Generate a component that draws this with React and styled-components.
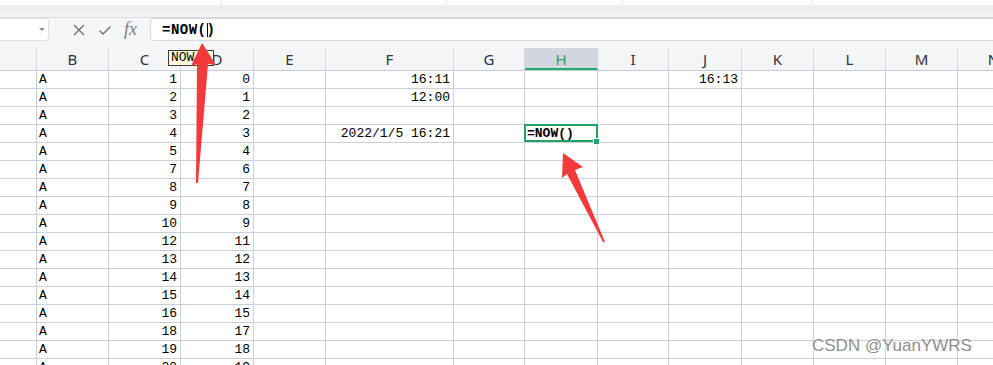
import styled, { createGlobalStyle } from "styled-components";

const GlobalStyle = createGlobalStyle`
  html, body {
    margin: 0;
    padding: 0;
    background: #ffffff;
    overflow: hidden;
  }
  body {
    font-family: "Liberation Mono", "DejaVu Sans Mono", monospace;
  }
`;

const COLS = [
  { key: "A", label: "", width: 37 },
  { key: "B", label: "B", width: 72 },
  { key: "C", label: "C", width: 72 },
  { key: "D", label: "D", width: 73 },
  { key: "E", label: "E", width: 72 },
  { key: "F", label: "F", width: 128 },
  { key: "G", label: "G", width: 71 },
  { key: "H", label: "H", width: 73 },
  { key: "I", label: "I", width: 71 },
  { key: "J", label: "J", width: 73 },
  { key: "K", label: "K", width: 72 },
  { key: "L", label: "L", width: 72 },
  { key: "M", label: "M", width: 72 },
  { key: "N", label: "N", width: 72 },
];

const template = COLS.map((c) => `${c.width}px`).join(" ");

const cData = [1, 2, 3, 4, 5, 7, 8, 9, 10, 12, 13, 14, 15, 16, 18, 19, 20];
const dData = [0, 1, 2, 3, 4, 6, 7, 8, 9, 11, 12, 13, 14, 15, 17, 18, 19];

const rows = cData.map((c, i) => ({
  B: "A",
  C: c,
  D: dData[i],
  F: i === 0 ? "16:11" : i === 1 ? "12:00" : i === 3 ? "2022/1/5 16:21" : "",
  H: i === 3 ? "=NOW()" : "",
  J: i === 0 ? "16:13" : "",
}));

const App = () => {
  return (
    <Page>
      <GlobalStyle />
      <TopStrip>
        <StripSeg w={222} />
        <StripSeg w={225} />
        <StripSeg w={176} />
        <StripSeg w={189} />
      </TopStrip>
      <Band />
      <FormulaRow>
        <NameBox>
          <Caret />
        </NameBox>
        <Tools>
          <svg width="14" height="14" viewBox="0 0 14 14">
            <path d="M2 2 L12 12 M12 2 L2 12" stroke="#6b6e75" strokeWidth="1.3" fill="none" />
          </svg>
          <svg width="14" height="14" viewBox="0 0 14 14">
            <path d="M1.5 7.5 L5 11 L12.5 3.5" stroke="#6b6e75" strokeWidth="1.3" fill="none" />
          </svg>
          <Fx>fx</Fx>
        </Tools>
        <FormulaBox>
          =NOW(<Cursor />)
        </FormulaBox>
      </FormulaRow>

      <HeaderRow>
        {COLS.map((c) => (
          <HeadCell key={c.key} active={c.key === "H"}>
            {c.label}
          </HeadCell>
        ))}
      </HeaderRow>

      <Grid>
        {rows.map((r, i) => (
          <Row key={i}>
            {COLS.map((c) => {
              const v = r[c.key];
              const isSel = c.key === "H" && i === 3;
              return (
                <Cell
                  key={c.key}
                  align={c.key === "B" || isSel ? "left" : "right"}
                  selected={isSel}
                >
                  {v}
                </Cell>
              );
            })}
          </Row>
        ))}
      </Grid>

      <Tip>NOW</Tip>

      <Arrows width="993" height="365" viewBox="0 0 993 365">
        <polygon
          points="202,43 216,65 208,64 198,183 196,183 197,64 191,66"
          fill="#f23a3a"
        />
        <polygon
          points="563,153 583,167 575,170 605,242 603,242 567,174 562,178"
          fill="#f23a3a"
        />
      </Arrows>

      <Watermark>CSDN @YuanYWRS</Watermark>
    </Page>
  );
};

export default App;

const Page = styled.div`
  position: relative;
  width: 993px;
  height: 365px;
  overflow: hidden;
  background: #fff;
`;

const TopStrip = styled.div`
  display: flex;
  height: 5px;
  background: #fff;
`;

const StripSeg = styled.div`
  width: ${({ w }) => w}px;
  border-right: 1px solid #e8e9ee;
  box-sizing: border-box;
`;

const Band = styled.div`
  height: 12px;
  background: linear-gradient(#ecedf1, #f4f5f7);
  border-bottom: 1px solid #d7dae2;
`;

const FormulaRow = styled.div`
  display: flex;
  align-items: stretch;
  height: 23px;
  background: #f5f6f8;
`;

const NameBox = styled.div`
  position: relative;
  width: 53px;
  margin-left: -4px;
  background: #fff;
  border: 1px solid #dcdfe6;
  border-radius: 3px;
  box-sizing: border-box;
  display: flex;
  align-items: center;
  justify-content: flex-end;
  padding-right: 3px;
`;

const Caret = styled.span`
  width: 0;
  height: 0;
  border-left: 3px solid transparent;
  border-right: 3px solid transparent;
  border-top: 3px solid #8a8d94;
`;

const Tools = styled.div`
  display: flex;
  align-items: center;
  gap: 12px;
  padding-left: 23px;
  width: 101px;
  box-sizing: border-box;
`;

const Fx = styled.span`
  font-family: "Liberation Serif", "DejaVu Serif", serif;
  font-style: italic;
  font-size: 18px;
  color: #7a7d84;
  line-height: 1;
  margin-top: -2px;
`;

const FormulaBox = styled.div`
  flex: 1;
  background: #fff;
  border: 1px solid #d6d9e1;
  border-right: none;
  border-radius: 3px 0 0 3px;
  box-sizing: border-box;
  display: flex;
  align-items: center;
  padding-left: 11px;
  font-family: "Liberation Mono", "DejaVu Sans Mono", monospace;
  font-weight: bold;
  font-size: 14px;
  letter-spacing: 0.5px;
  color: #000;
`;

const Cursor = styled.span`
  display: inline-block;
  width: 1px;
  height: 14px;
  background: #000;
  margin: 0 -1px 0 0;
`;

const HeaderRow = styled.div`
  display: grid;
  grid-template-columns: ${template};
  height: 30px;
  padding-top: 1px;
  background: #f4f5f7;
  border-bottom: 1px solid #c5cad8;
  box-sizing: border-box;
  align-items: end;
`;

const HeadCell = styled.div`
  height: 22px;
  display: flex;
  align-items: center;
  justify-content: center;
  border-right: 1px solid #d3d7e0;
  box-sizing: border-box;
  font-family: "Noto Sans", "Open Sans", sans-serif;
  font-size: 15px;
  color: ${({ active }) => (active ? "#21a366" : "#2f3238")};
  background: ${({ active }) => (active ? "#d3d6de" : "transparent")};
  border-bottom: ${({ active }) => (active ? "2px solid #1fae6e" : "none")};
  padding-top: ${({ active }) => (active ? "2px" : "0")};
`;

const Grid = styled.div`
  display: flex;
  flex-direction: column;
`;

const Row = styled.div`
  display: grid;
  grid-template-columns: ${template};
  height: 18px;
`;

const Cell = styled.div`
  position: relative;
  box-sizing: border-box;
  border-right: 1px solid #c9cee0;
  border-bottom: 1px solid #c9cee0;
  display: flex;
  align-items: center;
  justify-content: ${({ align }) => (align === "left" ? "flex-start" : "flex-end")};
  padding: 0 3px 0 2px;
  font-family: "Liberation Mono", "DejaVu Sans Mono", monospace;
  font-size: 13px;
  font-weight: ${({ selected }) => (selected ? "bold" : "normal")};
  color: #000;
  white-space: nowrap;

  ${({ selected }) =>
    selected &&
    `
    &::after {
      content: "";
      position: absolute;
      inset: -1px -1px 0 -1px;
      border: 2px solid #21a366;
      pointer-events: none;
    }
    &::before {
      content: "";
      position: absolute;
      right: -3px;
      bottom: -3px;
      width: 5px;
      height: 5px;
      background: #21a366;
      border: 1px solid #fff;
      z-index: 2;
    }
  `}
`;

const Tip = styled.div`
  position: absolute;
  left: 168px;
  top: 50px;
  width: 46px;
  height: 16px;
  padding: 0 2px;
  background: #ffffe1;
  border: 1px solid #3a3a3a;
  box-sizing: border-box;
  font-family: "Liberation Mono", "DejaVu Sans Mono", monospace;
  font-size: 13px;
  line-height: 14px;
  color: #000;
`;

const Arrows = styled.svg`
  position: absolute;
  left: 0;
  top: 0;
  pointer-events: none;
`;

const Watermark = styled.div`
  position: absolute;
  left: 812px;
  top: 336px;
  font-family: "Liberation Sans", Arial, sans-serif;
  font-size: 17px;
  color: #8e8e8e;
  text-shadow: 0 0 1px #fff;
  white-space: nowrap;
`;
